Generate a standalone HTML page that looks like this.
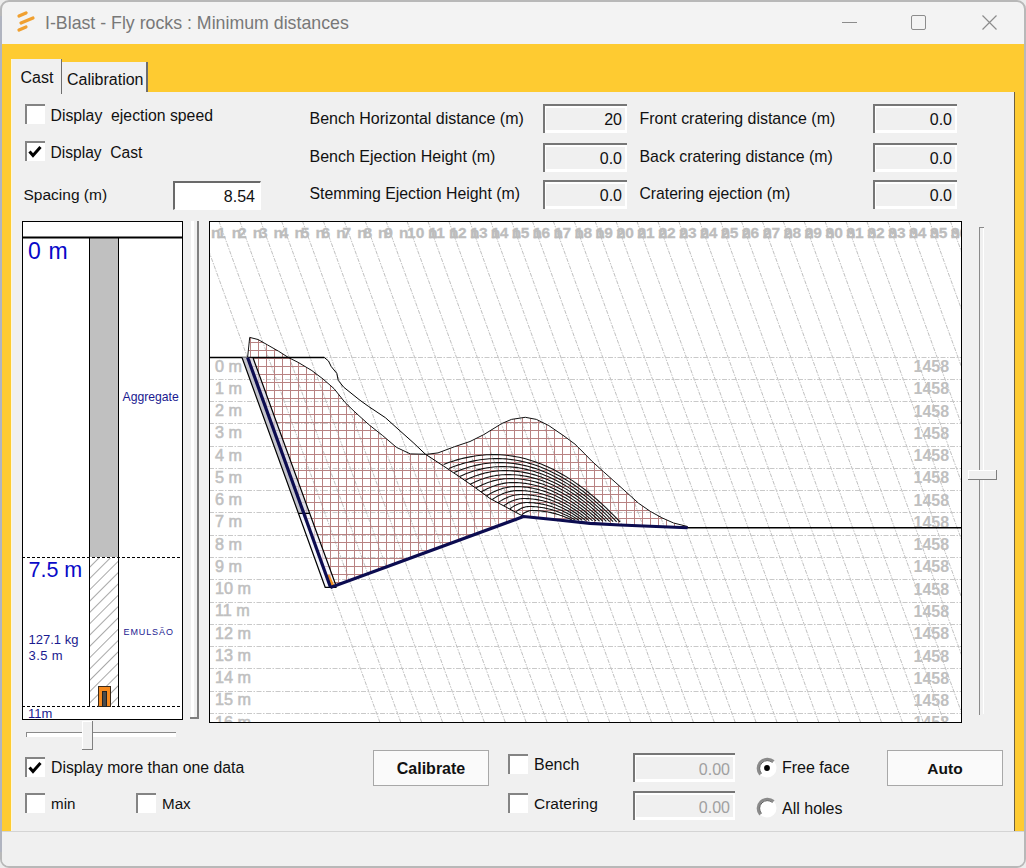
<!DOCTYPE html>
<html><head><meta charset="utf-8">
<style>
*{margin:0;padding:0;box-sizing:border-box}
html,body{width:1026px;height:868px;overflow:hidden;background:#ececec;font-family:"Liberation Sans",sans-serif;color:#000}
.abs{position:absolute}
.t{position:absolute;white-space:nowrap;font-size:16px;line-height:16px;color:#111}
.cb{position:absolute;width:20px;height:20px;background:#fff;border-top:2px solid #848484;border-left:2px solid #848484}
.inp{position:absolute;background:#fff;border-top:2px solid #6a6a6a;border-left:2px solid #6a6a6a;border-right:1px solid #fff;border-bottom:1px solid #fff}
.inpg{position:absolute;background:#f0f0f0;border-top:2px solid #767676;border-left:2px solid #767676;box-shadow:inset 1px 2px 0 #fff, inset -2px -3px 0 #fff}
.btn{position:absolute;background:#fafafa;border:1px solid #a8a8a8}
</style></head><body>
<div class="abs" style="left:0;top:0;width:1026px;height:868px;background:#f3f3f3;border:2px solid #b8b8b8;border-radius:9px"></div>
<div class="abs" style="left:0;top:16px;width:2px;height:836px;background:#b0b4c0"></div>

<svg class="abs" style="left:14px;top:10px" width="24" height="24" viewBox="0 0 24 24"><g stroke="#f0a030" stroke-width="3.2" stroke-linecap="round" fill="none"><path d="M5 6 L12 3"/><path d="M7 13 L19 8"/><path d="M5 20 L12 17"/></g></svg>
<div class="abs" style="left:45px;top:13.4px;font-size:17.75px;line-height:20px;color:#787878;white-space:nowrap">I-Blast - Fly rocks : Minimum distances</div>
<div class="abs" style="left:842px;top:21.5px;width:15px;height:1px;background:#8c8c8c"></div>
<div class="abs" style="left:911px;top:15px;width:15px;height:15px;border:1.2px solid #8c8c8c;border-radius:2px"></div>
<svg class="abs" style="left:981px;top:14px" width="17" height="17" viewBox="0 0 17 17"><path d="M1.5 1.5L15.5 15.5M15.5 1.5L1.5 15.5" stroke="#8c8c8c" stroke-width="1.2"/></svg>
<div class="abs" style="left:2px;top:44px;width:1022px;height:787px;background:#fecb31"></div>
<div class="abs" style="left:11px;top:59px;width:51px;height:35px;background:#f0f0f0;border-left:1px solid #fff8d8"></div>
<div class="t" style="left:20.5px;top:70px;font-size:16px">Cast</div>
<div class="abs" style="left:62px;top:62px;width:86px;height:30px;background:#f0f0f0;border-right:2px solid #6e6e6e"></div>
<div class="t" style="left:67px;top:72px;font-size:16px">Calibration</div>
<div class="abs" style="left:11px;top:92px;width:1003px;height:739px;background:#f0f0f0;border-left:1px solid #fff8d8"></div>
<div class="abs" style="left:1014px;top:92px;width:1px;height:739px;background:#6e6040"></div>
<div class="abs" style="left:60.5px;top:59px;width:1.5px;height:35px;background:#6e6e6e"></div>
<div class="abs" style="left:2px;top:831px;width:1022px;height:35px;background:#f0f0f0;border-top:1px solid #d4d4d4;border-radius:0 0 7px 7px"></div>
<div class="cb" style="left:25px;top:104px"></div>
<div class="t" style="left:50.5px;top:107.5px;font-size:15.8px">Display&nbsp; ejection speed</div>
<div class="cb" style="left:25px;top:141px"></div>
<svg class="abs" style="left:28px;top:145px" width="14" height="13" viewBox="0 0 14 13"><path d="M1.5 6.5 L5 10.5 L12.5 2" stroke="#000" stroke-width="3" fill="none"/></svg>
<div class="t" style="left:50.5px;top:144.5px;font-size:15.6px">Display&nbsp; Cast</div>
<div class="t" style="left:23.5px;top:187px;font-size:15.5px">Spacing (m)</div>
<div class="inp" style="left:173px;top:181px;width:88px;height:29px"></div>
<div class="t" style="left:173px;top:189px;width:82px;text-align:right;font-size:16px">8.54</div>
<div class="t" style="left:309.5px;top:110.5px;font-size:16px">Bench Horizontal distance (m)</div>
<div class="t" style="left:309.5px;top:149px;font-size:16px">Bench Ejection Height (m)</div>
<div class="t" style="left:309.5px;top:185.8px;font-size:15.85px">Stemming Ejection Height (m)</div>
<div class="t" style="left:639.5px;top:110.5px;font-size:15.95px">Front cratering distance (m)</div>
<div class="t" style="left:639.5px;top:149px;font-size:15.9px">Back cratering distance (m)</div>
<div class="t" style="left:639.5px;top:185.8px;font-size:15.7px">Cratering ejection (m)</div>
<div class="inpg" style="left:543px;top:104px;width:84px;height:29px"></div>
<div class="t" style="left:543px;top:112px;width:79px;text-align:right;font-size:16px">20</div>
<div class="inpg" style="left:543px;top:143px;width:84px;height:29px"></div>
<div class="t" style="left:543px;top:151px;width:79px;text-align:right;font-size:16px">0.0</div>
<div class="inpg" style="left:543px;top:180px;width:84px;height:29px"></div>
<div class="t" style="left:543px;top:188px;width:79px;text-align:right;font-size:16px">0.0</div>
<div class="inpg" style="left:873px;top:104px;width:84px;height:29px"></div>
<div class="t" style="left:873px;top:112px;width:79px;text-align:right;font-size:16px">0.0</div>
<div class="inpg" style="left:873px;top:143px;width:84px;height:29px"></div>
<div class="t" style="left:873px;top:151px;width:79px;text-align:right;font-size:16px">0.0</div>
<div class="inpg" style="left:873px;top:180px;width:84px;height:29px"></div>
<div class="t" style="left:873px;top:188px;width:79px;text-align:right;font-size:16px">0.0</div>
<div class="abs" style="left:190px;top:221px;width:9px;height:498px;border-right:2px solid #808080;border-bottom:2px solid #808080"></div>
<div class="abs" style="left:191px;top:221px;width:3px;height:496px;background:#fff"></div>
<svg class="abs" style="left:0;top:0" width="1026" height="868" viewBox="0 0 1026 868"><defs><clipPath id="cc"><rect x="210" y="222" width="751" height="500"/></clipPath><pattern id="hg" patternUnits="userSpaceOnUse" x="250" y="342" width="8" height="8"><rect x="0" y="0" width="1" height="8" fill="#b88282"/><rect x="0" y="0" width="8" height="1" fill="#b88282"/></pattern><pattern id="lh" patternUnits="userSpaceOnUse" x="0" y="0" width="8" height="8" patternTransform="rotate(45)"><rect x="0" y="0" width="1" height="8" fill="#a8a8a8"/></pattern></defs><rect x="209" y="221" width="753" height="502" fill="#fff"/><g clip-path="url(#cc)"><path d="M197.92 221L380.15 723M218.82 221L401.05 723M239.72 221L421.95 723M260.62 221L442.85 723M281.52 221L463.75 723M302.42 221L484.65 723M323.32 221L505.55 723M344.22 221L526.45 723M365.12 221L547.35 723M386.02 221L568.25 723M406.92 221L589.15 723M427.82 221L610.05 723M448.72 221L630.95 723M469.62 221L651.85 723M490.52 221L672.75 723M511.42 221L693.65 723M532.32 221L714.55 723M553.22 221L735.45 723M574.12 221L756.35 723M595.02 221L777.25 723M615.92 221L798.15 723M636.82 221L819.05 723M657.72 221L839.95 723M678.62 221L860.85 723M699.52 221L881.75 723M720.42 221L902.65 723M741.32 221L923.55 723M762.22 221L944.45 723M783.12 221L965.35 723M804.02 221L986.25 723M824.92 221L1007.15 723M845.82 221L1028.05 723M866.72 221L1048.95 723M887.62 221L1069.85 723M908.52 221L1090.75 723M929.42 221L1111.65 723M950.32 221L1132.55 723" stroke="#c0c0c0" stroke-width="1" stroke-dasharray="4 1.2 1.5 1.2" fill="none"/><path d="M209 357.5H962M209 379.5H962M209 401.5H962M209 423.5H962M209 446.5H962M209 468.5H962M209 490.5H962M209 512.5H962M209 535.5H962M209 557.5H962M209 579.5H962M209 602.5H962M209 624.5H962M209 646.5H962M209 668.5H962M209 691.5H962M209 713.5H962" stroke="#c9c9c9" stroke-width="1" stroke-dasharray="5 1.5 1.5 1.5" fill="none"/><text x="210.9" y="238.4" font-family="Liberation Sans" font-weight="bold" font-size="15.5" fill="#bdbdbd" stroke="#bdbdbd" stroke-width="0.3">n</text><text x="217.1" y="238.4" font-family="Liberation Sans" font-weight="bold" font-size="15.5" fill="#bdbdbd" stroke="#bdbdbd" stroke-width="0.3">1</text><text x="231.8" y="238.4" font-family="Liberation Sans" font-weight="bold" font-size="15.5" fill="#bdbdbd" stroke="#bdbdbd" stroke-width="0.3">n</text><text x="238.0" y="238.4" font-family="Liberation Sans" font-weight="bold" font-size="15.5" fill="#bdbdbd" stroke="#bdbdbd" stroke-width="0.3">2</text><text x="252.7" y="238.4" font-family="Liberation Sans" font-weight="bold" font-size="15.5" fill="#bdbdbd" stroke="#bdbdbd" stroke-width="0.3">n</text><text x="258.9" y="238.4" font-family="Liberation Sans" font-weight="bold" font-size="15.5" fill="#bdbdbd" stroke="#bdbdbd" stroke-width="0.3">3</text><text x="273.6" y="238.4" font-family="Liberation Sans" font-weight="bold" font-size="15.5" fill="#bdbdbd" stroke="#bdbdbd" stroke-width="0.3">n</text><text x="279.8" y="238.4" font-family="Liberation Sans" font-weight="bold" font-size="15.5" fill="#bdbdbd" stroke="#bdbdbd" stroke-width="0.3">4</text><text x="294.5" y="238.4" font-family="Liberation Sans" font-weight="bold" font-size="15.5" fill="#bdbdbd" stroke="#bdbdbd" stroke-width="0.3">n</text><text x="300.7" y="238.4" font-family="Liberation Sans" font-weight="bold" font-size="15.5" fill="#bdbdbd" stroke="#bdbdbd" stroke-width="0.3">5</text><text x="315.4" y="238.4" font-family="Liberation Sans" font-weight="bold" font-size="15.5" fill="#bdbdbd" stroke="#bdbdbd" stroke-width="0.3">n</text><text x="321.6" y="238.4" font-family="Liberation Sans" font-weight="bold" font-size="15.5" fill="#bdbdbd" stroke="#bdbdbd" stroke-width="0.3">6</text><text x="336.3" y="238.4" font-family="Liberation Sans" font-weight="bold" font-size="15.5" fill="#bdbdbd" stroke="#bdbdbd" stroke-width="0.3">n</text><text x="342.5" y="238.4" font-family="Liberation Sans" font-weight="bold" font-size="15.5" fill="#bdbdbd" stroke="#bdbdbd" stroke-width="0.3">7</text><text x="357.2" y="238.4" font-family="Liberation Sans" font-weight="bold" font-size="15.5" fill="#bdbdbd" stroke="#bdbdbd" stroke-width="0.3">n</text><text x="363.4" y="238.4" font-family="Liberation Sans" font-weight="bold" font-size="15.5" fill="#bdbdbd" stroke="#bdbdbd" stroke-width="0.3">8</text><text x="378.1" y="238.4" font-family="Liberation Sans" font-weight="bold" font-size="15.5" fill="#bdbdbd" stroke="#bdbdbd" stroke-width="0.3">n</text><text x="384.3" y="238.4" font-family="Liberation Sans" font-weight="bold" font-size="15.5" fill="#bdbdbd" stroke="#bdbdbd" stroke-width="0.3">9</text><text x="399.0" y="238.4" font-family="Liberation Sans" font-weight="bold" font-size="15.5" fill="#bdbdbd" stroke="#bdbdbd" stroke-width="0.3">n</text><text x="407.1" y="238.4" font-family="Liberation Sans" font-weight="bold" font-size="15.5" fill="#bdbdbd" stroke="#bdbdbd" stroke-width="0.3">10</text><text x="428.1" y="238.4" font-family="Liberation Sans" font-weight="bold" font-size="15.5" fill="#bdbdbd" stroke="#bdbdbd" stroke-width="0.3">n</text><text x="428.5" y="238.4" font-family="Liberation Sans" font-weight="bold" font-size="15.5" fill="#bdbdbd" stroke="#bdbdbd" stroke-width="0.3">11</text><text x="449.0" y="238.4" font-family="Liberation Sans" font-weight="bold" font-size="15.5" fill="#bdbdbd" stroke="#bdbdbd" stroke-width="0.3">n</text><text x="449.4" y="238.4" font-family="Liberation Sans" font-weight="bold" font-size="15.5" fill="#bdbdbd" stroke="#bdbdbd" stroke-width="0.3">12</text><text x="469.9" y="238.4" font-family="Liberation Sans" font-weight="bold" font-size="15.5" fill="#bdbdbd" stroke="#bdbdbd" stroke-width="0.3">n</text><text x="470.3" y="238.4" font-family="Liberation Sans" font-weight="bold" font-size="15.5" fill="#bdbdbd" stroke="#bdbdbd" stroke-width="0.3">13</text><text x="490.8" y="238.4" font-family="Liberation Sans" font-weight="bold" font-size="15.5" fill="#bdbdbd" stroke="#bdbdbd" stroke-width="0.3">n</text><text x="491.2" y="238.4" font-family="Liberation Sans" font-weight="bold" font-size="15.5" fill="#bdbdbd" stroke="#bdbdbd" stroke-width="0.3">14</text><text x="511.7" y="238.4" font-family="Liberation Sans" font-weight="bold" font-size="15.5" fill="#bdbdbd" stroke="#bdbdbd" stroke-width="0.3">n</text><text x="512.1" y="238.4" font-family="Liberation Sans" font-weight="bold" font-size="15.5" fill="#bdbdbd" stroke="#bdbdbd" stroke-width="0.3">15</text><text x="532.6" y="238.4" font-family="Liberation Sans" font-weight="bold" font-size="15.5" fill="#bdbdbd" stroke="#bdbdbd" stroke-width="0.3">n</text><text x="533.0" y="238.4" font-family="Liberation Sans" font-weight="bold" font-size="15.5" fill="#bdbdbd" stroke="#bdbdbd" stroke-width="0.3">16</text><text x="553.5" y="238.4" font-family="Liberation Sans" font-weight="bold" font-size="15.5" fill="#bdbdbd" stroke="#bdbdbd" stroke-width="0.3">n</text><text x="553.9" y="238.4" font-family="Liberation Sans" font-weight="bold" font-size="15.5" fill="#bdbdbd" stroke="#bdbdbd" stroke-width="0.3">17</text><text x="574.4" y="238.4" font-family="Liberation Sans" font-weight="bold" font-size="15.5" fill="#bdbdbd" stroke="#bdbdbd" stroke-width="0.3">n</text><text x="574.8" y="238.4" font-family="Liberation Sans" font-weight="bold" font-size="15.5" fill="#bdbdbd" stroke="#bdbdbd" stroke-width="0.3">18</text><text x="595.3" y="238.4" font-family="Liberation Sans" font-weight="bold" font-size="15.5" fill="#bdbdbd" stroke="#bdbdbd" stroke-width="0.3">n</text><text x="595.7" y="238.4" font-family="Liberation Sans" font-weight="bold" font-size="15.5" fill="#bdbdbd" stroke="#bdbdbd" stroke-width="0.3">19</text><text x="616.2" y="238.4" font-family="Liberation Sans" font-weight="bold" font-size="15.5" fill="#bdbdbd" stroke="#bdbdbd" stroke-width="0.3">n</text><text x="616.6" y="238.4" font-family="Liberation Sans" font-weight="bold" font-size="15.5" fill="#bdbdbd" stroke="#bdbdbd" stroke-width="0.3">20</text><text x="637.1" y="238.4" font-family="Liberation Sans" font-weight="bold" font-size="15.5" fill="#bdbdbd" stroke="#bdbdbd" stroke-width="0.3">n</text><text x="637.5" y="238.4" font-family="Liberation Sans" font-weight="bold" font-size="15.5" fill="#bdbdbd" stroke="#bdbdbd" stroke-width="0.3">21</text><text x="658.0" y="238.4" font-family="Liberation Sans" font-weight="bold" font-size="15.5" fill="#bdbdbd" stroke="#bdbdbd" stroke-width="0.3">n</text><text x="658.4" y="238.4" font-family="Liberation Sans" font-weight="bold" font-size="15.5" fill="#bdbdbd" stroke="#bdbdbd" stroke-width="0.3">22</text><text x="678.9" y="238.4" font-family="Liberation Sans" font-weight="bold" font-size="15.5" fill="#bdbdbd" stroke="#bdbdbd" stroke-width="0.3">n</text><text x="679.3" y="238.4" font-family="Liberation Sans" font-weight="bold" font-size="15.5" fill="#bdbdbd" stroke="#bdbdbd" stroke-width="0.3">23</text><text x="699.8" y="238.4" font-family="Liberation Sans" font-weight="bold" font-size="15.5" fill="#bdbdbd" stroke="#bdbdbd" stroke-width="0.3">n</text><text x="700.2" y="238.4" font-family="Liberation Sans" font-weight="bold" font-size="15.5" fill="#bdbdbd" stroke="#bdbdbd" stroke-width="0.3">24</text><text x="720.7" y="238.4" font-family="Liberation Sans" font-weight="bold" font-size="15.5" fill="#bdbdbd" stroke="#bdbdbd" stroke-width="0.3">n</text><text x="721.1" y="238.4" font-family="Liberation Sans" font-weight="bold" font-size="15.5" fill="#bdbdbd" stroke="#bdbdbd" stroke-width="0.3">25</text><text x="741.6" y="238.4" font-family="Liberation Sans" font-weight="bold" font-size="15.5" fill="#bdbdbd" stroke="#bdbdbd" stroke-width="0.3">n</text><text x="742.0" y="238.4" font-family="Liberation Sans" font-weight="bold" font-size="15.5" fill="#bdbdbd" stroke="#bdbdbd" stroke-width="0.3">26</text><text x="762.5" y="238.4" font-family="Liberation Sans" font-weight="bold" font-size="15.5" fill="#bdbdbd" stroke="#bdbdbd" stroke-width="0.3">n</text><text x="762.9" y="238.4" font-family="Liberation Sans" font-weight="bold" font-size="15.5" fill="#bdbdbd" stroke="#bdbdbd" stroke-width="0.3">27</text><text x="783.4" y="238.4" font-family="Liberation Sans" font-weight="bold" font-size="15.5" fill="#bdbdbd" stroke="#bdbdbd" stroke-width="0.3">n</text><text x="783.8" y="238.4" font-family="Liberation Sans" font-weight="bold" font-size="15.5" fill="#bdbdbd" stroke="#bdbdbd" stroke-width="0.3">28</text><text x="804.3" y="238.4" font-family="Liberation Sans" font-weight="bold" font-size="15.5" fill="#bdbdbd" stroke="#bdbdbd" stroke-width="0.3">n</text><text x="804.7" y="238.4" font-family="Liberation Sans" font-weight="bold" font-size="15.5" fill="#bdbdbd" stroke="#bdbdbd" stroke-width="0.3">29</text><text x="825.2" y="238.4" font-family="Liberation Sans" font-weight="bold" font-size="15.5" fill="#bdbdbd" stroke="#bdbdbd" stroke-width="0.3">n</text><text x="825.6" y="238.4" font-family="Liberation Sans" font-weight="bold" font-size="15.5" fill="#bdbdbd" stroke="#bdbdbd" stroke-width="0.3">30</text><text x="846.1" y="238.4" font-family="Liberation Sans" font-weight="bold" font-size="15.5" fill="#bdbdbd" stroke="#bdbdbd" stroke-width="0.3">n</text><text x="846.5" y="238.4" font-family="Liberation Sans" font-weight="bold" font-size="15.5" fill="#bdbdbd" stroke="#bdbdbd" stroke-width="0.3">31</text><text x="867.0" y="238.4" font-family="Liberation Sans" font-weight="bold" font-size="15.5" fill="#bdbdbd" stroke="#bdbdbd" stroke-width="0.3">n</text><text x="867.4" y="238.4" font-family="Liberation Sans" font-weight="bold" font-size="15.5" fill="#bdbdbd" stroke="#bdbdbd" stroke-width="0.3">32</text><text x="887.9" y="238.4" font-family="Liberation Sans" font-weight="bold" font-size="15.5" fill="#bdbdbd" stroke="#bdbdbd" stroke-width="0.3">n</text><text x="888.3" y="238.4" font-family="Liberation Sans" font-weight="bold" font-size="15.5" fill="#bdbdbd" stroke="#bdbdbd" stroke-width="0.3">33</text><text x="908.8" y="238.4" font-family="Liberation Sans" font-weight="bold" font-size="15.5" fill="#bdbdbd" stroke="#bdbdbd" stroke-width="0.3">n</text><text x="909.2" y="238.4" font-family="Liberation Sans" font-weight="bold" font-size="15.5" fill="#bdbdbd" stroke="#bdbdbd" stroke-width="0.3">34</text><text x="929.7" y="238.4" font-family="Liberation Sans" font-weight="bold" font-size="15.5" fill="#bdbdbd" stroke="#bdbdbd" stroke-width="0.3">n</text><text x="930.1" y="238.4" font-family="Liberation Sans" font-weight="bold" font-size="15.5" fill="#bdbdbd" stroke="#bdbdbd" stroke-width="0.3">35</text><text x="950.6" y="238.4" font-family="Liberation Sans" font-weight="bold" font-size="15.5" fill="#bdbdbd" stroke="#bdbdbd" stroke-width="0.3">n</text><text x="951.0" y="238.4" font-family="Liberation Sans" font-weight="bold" font-size="15.5" fill="#bdbdbd" stroke="#bdbdbd" stroke-width="0.3">36</text><text x="215" y="371.6" font-family="Liberation Sans" font-size="16.2" fill="#c0c0c0" stroke="#c0c0c0" stroke-width="0.55">0 m</text><text x="913.5" y="371.9" font-family="Liberation Sans" font-weight="bold" font-size="16" fill="#c0c0c0">1458</text><text x="215" y="393.9" font-family="Liberation Sans" font-size="16.2" fill="#c0c0c0" stroke="#c0c0c0" stroke-width="0.55">1 m</text><text x="913.5" y="394.2" font-family="Liberation Sans" font-weight="bold" font-size="16" fill="#c0c0c0">1458</text><text x="215" y="416.1" font-family="Liberation Sans" font-size="16.2" fill="#c0c0c0" stroke="#c0c0c0" stroke-width="0.55">2 m</text><text x="913.5" y="416.5" font-family="Liberation Sans" font-weight="bold" font-size="16" fill="#c0c0c0">1458</text><text x="215" y="438.4" font-family="Liberation Sans" font-size="16.2" fill="#c0c0c0" stroke="#c0c0c0" stroke-width="0.55">3 m</text><text x="913.5" y="438.7" font-family="Liberation Sans" font-weight="bold" font-size="16" fill="#c0c0c0">1458</text><text x="215" y="460.6" font-family="Liberation Sans" font-size="16.2" fill="#c0c0c0" stroke="#c0c0c0" stroke-width="0.55">4 m</text><text x="913.5" y="461.0" font-family="Liberation Sans" font-weight="bold" font-size="16" fill="#c0c0c0">1458</text><text x="215" y="482.9" font-family="Liberation Sans" font-size="16.2" fill="#c0c0c0" stroke="#c0c0c0" stroke-width="0.55">5 m</text><text x="913.5" y="483.3" font-family="Liberation Sans" font-weight="bold" font-size="16" fill="#c0c0c0">1458</text><text x="215" y="505.1" font-family="Liberation Sans" font-size="16.2" fill="#c0c0c0" stroke="#c0c0c0" stroke-width="0.55">6 m</text><text x="913.5" y="505.6" font-family="Liberation Sans" font-weight="bold" font-size="16" fill="#c0c0c0">1458</text><text x="215" y="527.4" font-family="Liberation Sans" font-size="16.2" fill="#c0c0c0" stroke="#c0c0c0" stroke-width="0.55">7 m</text><text x="913.5" y="527.9" font-family="Liberation Sans" font-weight="bold" font-size="16" fill="#c0c0c0">1458</text><text x="215" y="549.6" font-family="Liberation Sans" font-size="16.2" fill="#c0c0c0" stroke="#c0c0c0" stroke-width="0.55">8 m</text><text x="913.5" y="550.1" font-family="Liberation Sans" font-weight="bold" font-size="16" fill="#c0c0c0">1458</text><text x="215" y="571.9" font-family="Liberation Sans" font-size="16.2" fill="#c0c0c0" stroke="#c0c0c0" stroke-width="0.55">9 m</text><text x="913.5" y="572.4" font-family="Liberation Sans" font-weight="bold" font-size="16" fill="#c0c0c0">1458</text><text x="215" y="594.1" font-family="Liberation Sans" font-size="16.2" fill="#c0c0c0" stroke="#c0c0c0" stroke-width="0.55">10 m</text><text x="913.5" y="594.7" font-family="Liberation Sans" font-weight="bold" font-size="16" fill="#c0c0c0">1458</text><text x="215" y="616.4" font-family="Liberation Sans" font-size="16.2" fill="#c0c0c0" stroke="#c0c0c0" stroke-width="0.55">11 m</text><text x="913.5" y="617.0" font-family="Liberation Sans" font-weight="bold" font-size="16" fill="#c0c0c0">1458</text><text x="215" y="638.6" font-family="Liberation Sans" font-size="16.2" fill="#c0c0c0" stroke="#c0c0c0" stroke-width="0.55">12 m</text><text x="913.5" y="639.3" font-family="Liberation Sans" font-weight="bold" font-size="16" fill="#c0c0c0">1458</text><text x="215" y="660.9" font-family="Liberation Sans" font-size="16.2" fill="#c0c0c0" stroke="#c0c0c0" stroke-width="0.55">13 m</text><text x="913.5" y="661.5" font-family="Liberation Sans" font-weight="bold" font-size="16" fill="#c0c0c0">1458</text><text x="215" y="683.1" font-family="Liberation Sans" font-size="16.2" fill="#c0c0c0" stroke="#c0c0c0" stroke-width="0.55">14 m</text><text x="913.5" y="683.8" font-family="Liberation Sans" font-weight="bold" font-size="16" fill="#c0c0c0">1458</text><text x="215" y="705.4" font-family="Liberation Sans" font-size="16.2" fill="#c0c0c0" stroke="#c0c0c0" stroke-width="0.55">15 m</text><text x="913.5" y="706.1" font-family="Liberation Sans" font-weight="bold" font-size="16" fill="#c0c0c0">1458</text><text x="215" y="727.6" font-family="Liberation Sans" font-size="16.2" fill="#c0c0c0" stroke="#c0c0c0" stroke-width="0.55">16 m</text><text x="913.5" y="728.4" font-family="Liberation Sans" font-weight="bold" font-size="16" fill="#c0c0c0">1458</text><path d="M247.6 357.5 L249.7 337.4 L258 339.5 L267.7 345 L278.7 351.3 L288.4 357.5 L298 362.3 L311.9 370.6 L323 379 L334 388.6 L345 402.4 L355 412.1 L368.8 424.6 L382.7 435.6 L396.5 447.4 L410.3 453.9 L426.9 454.3 L438 452.9 L454.5 446.7 L470 441.5 L483.8 434.6 L501.8 423.5 L511.5 419.4 L525.3 417.3 L536.4 419.4 L548.8 425.6 L564 436 L575 444.2 L584.8 453.9 L591.7 461 L603.4 471.6 L615.1 482.1 L626.8 492.6 L638.5 503.2 L650.2 511.3 L661.9 517.8 L673.6 523 L687.6 526.5 L687.6 527.5 L650 526.3 L620 525 L590 523.4 L558.2 520 L523.6 516.5 L330.4 587.5Z" fill="url(#hg)"/><path d="M209 357.5 L324.3 357.5 L328.5 361 L331.2 366.5 L336.8 373.4 L338.2 380.3 L343.7 387.2 L360 400.3 L368.8 406.6 L385.4 417.7 L399.2 430.1 L413.1 442.5 L425.5 454.3 L443.5 466 L460 477.1 L475 487.5 L490 498.5 L523.6 516.5" stroke="#000" stroke-width="1" fill="none"/><path d="M247.6 357.5 L249.7 337.4 L258 339.5 L267.7 345 L278.7 351.3 L288.4 357.5 L298 362.3 L311.9 370.6 L323 379 L334 388.6 L345 402.4 L355 412.1 L368.8 424.6 L382.7 435.6 L396.5 447.4 L410.3 453.9 L426.9 454.3 L438 452.9 L454.5 446.7 L470 441.5 L483.8 434.6 L501.8 423.5 L511.5 419.4 L525.3 417.3 L536.4 419.4 L548.8 425.6 L564 436 L575 444.2 L584.8 453.9 L591.7 461 L603.4 471.6 L615.1 482.1 L626.8 492.6 L638.5 503.2 L650.2 511.3 L661.9 517.8 L673.6 523 L687.6 526.5" stroke="#111" stroke-width="1" fill="none"/><path d="M209 357.5H324.3" stroke="#000" stroke-width="1.6" fill="none"/><path d="M687 527.8H962" stroke="#000" stroke-width="1.4" fill="none"/><path d="M443.6 464.4 L446.1 463.4 L448.6 462.5 L451.2 461.7 L453.7 460.9 L456.2 460.1 L458.7 459.4 L461.2 458.7 L463.8 458.1 L466.3 457.6 L468.8 457.1 L471.3 456.6 L473.8 456.2 L476.4 455.8 L478.9 455.5 L481.4 455.2 L483.9 455.0 L486.4 454.8 L489.0 454.7 L491.5 454.6 L494.0 454.6 L497.1 454.6 L500.3 454.8 L503.4 455.0 L506.6 455.3 L509.8 455.7 L512.9 456.1 L516.0 456.7 L519.2 457.3 L522.4 458.0 L525.5 458.8 L528.6 459.7 L531.8 460.7 L535.0 461.7 L538.1 462.9 L541.2 464.1 L544.4 465.4 L547.5 466.8 L550.7 468.2 L553.9 469.8 L557.0 471.5 L560.1 473.2 L563.3 475.0 L566.5 476.9 L569.6 478.9 L572.8 480.9 L575.9 483.1 L579.0 485.3 L582.2 487.6 L585.4 490.0 L588.5 492.5 L591.6 495.1 L594.8 497.7 L598.0 500.5 L601.1 503.3 L604.2 506.2 L607.4 509.2 L610.5 512.3 L613.7 515.4 L616.9 518.7 L620.0 522.0 M448.9 468.5 L451.3 467.5 L453.7 466.6 L456.0 465.7 L458.4 464.9 L460.8 464.2 L463.2 463.4 L465.6 462.8 L468.0 462.2 L470.4 461.6 L472.8 461.1 L475.2 460.6 L477.6 460.2 L480.0 459.8 L482.4 459.5 L484.8 459.2 L487.1 459.0 L489.5 458.8 L491.9 458.7 L494.3 458.6 L496.7 458.6 L499.7 458.6 L502.7 458.8 L505.7 458.9 L508.7 459.2 L511.7 459.6 L514.7 460.0 L517.7 460.5 L520.7 461.1 L523.7 461.8 L526.7 462.5 L529.7 463.4 L532.7 464.3 L535.7 465.3 L538.7 466.3 L541.7 467.5 L544.7 468.7 L547.7 470.0 L550.6 471.4 L553.6 472.9 L556.6 474.4 L559.6 476.0 L562.6 477.7 L565.6 479.5 L568.6 481.4 L571.6 483.3 L574.6 485.3 L577.6 487.4 L580.6 489.6 L583.6 491.8 L586.6 494.2 L589.6 496.6 L592.6 499.1 L595.6 501.7 L598.6 504.3 L601.6 507.0 L604.6 509.8 L607.6 512.7 L610.6 515.7 L613.6 518.7 L616.6 521.9 M454.1 472.6 L456.4 471.6 L458.7 470.7 L460.9 469.8 L463.2 469.0 L465.5 468.2 L467.7 467.5 L470.0 466.8 L472.3 466.2 L474.5 465.6 L476.8 465.1 L479.0 464.6 L481.3 464.2 L483.6 463.8 L485.8 463.5 L488.1 463.2 L490.4 463.0 L492.6 462.8 L494.9 462.7 L497.2 462.6 L499.4 462.6 L502.3 462.6 L505.1 462.7 L508.0 462.9 L510.8 463.2 L513.6 463.5 L516.5 463.9 L519.3 464.4 L522.2 465.0 L525.0 465.6 L527.9 466.3 L530.7 467.1 L533.5 467.9 L536.4 468.8 L539.2 469.8 L542.1 470.9 L544.9 472.0 L547.8 473.3 L550.6 474.6 L553.4 475.9 L556.3 477.4 L559.1 478.9 L562.0 480.5 L564.8 482.1 L567.7 483.9 L570.5 485.7 L573.3 487.6 L576.2 489.5 L579.0 491.6 L581.9 493.7 L584.7 495.8 L587.6 498.1 L590.4 500.4 L593.2 502.8 L596.1 505.3 L598.9 507.9 L601.8 510.5 L604.6 513.2 L607.5 515.9 L610.3 518.8 L613.1 521.7 M459.4 476.6 L461.5 475.7 L463.7 474.7 L465.8 473.8 L467.9 473.0 L470.1 472.2 L472.2 471.5 L474.4 470.8 L476.5 470.2 L478.6 469.6 L480.8 469.1 L482.9 468.6 L485.0 468.2 L487.2 467.8 L489.3 467.5 L491.5 467.2 L493.6 467.0 L495.7 466.8 L497.9 466.7 L500.0 466.6 L502.1 466.6 L504.8 466.6 L507.5 466.7 L510.2 466.9 L512.9 467.1 L515.6 467.4 L518.3 467.8 L521.0 468.3 L523.7 468.8 L526.3 469.4 L529.0 470.0 L531.7 470.7 L534.4 471.5 L537.1 472.4 L539.8 473.3 L542.5 474.3 L545.2 475.4 L547.9 476.5 L550.5 477.7 L553.2 479.0 L555.9 480.3 L558.6 481.7 L561.3 483.2 L564.0 484.8 L566.7 486.4 L569.4 488.1 L572.1 489.8 L574.8 491.6 L577.4 493.5 L580.1 495.5 L582.8 497.5 L585.5 499.6 L588.2 501.8 L590.9 504.0 L593.6 506.3 L596.3 508.7 L599.0 511.1 L601.6 513.6 L604.3 516.2 L607.0 518.9 L609.7 521.6 M464.8 480.5 L466.8 479.5 L468.8 478.6 L470.8 477.7 L472.8 476.9 L474.9 476.1 L476.9 475.4 L478.9 474.7 L480.9 474.1 L482.9 473.6 L484.9 473.0 L486.9 472.6 L488.9 472.2 L490.9 471.8 L492.9 471.5 L494.9 471.2 L496.9 471.0 L498.9 470.8 L500.9 470.7 L502.9 470.6 L504.9 470.6 L507.4 470.6 L509.9 470.7 L512.5 470.9 L515.0 471.1 L517.5 471.4 L520.1 471.7 L522.6 472.1 L525.1 472.6 L527.7 473.1 L530.2 473.8 L532.8 474.4 L535.3 475.1 L537.8 475.9 L540.4 476.8 L542.9 477.7 L545.4 478.7 L548.0 479.8 L550.5 480.9 L553.0 482.0 L555.6 483.3 L558.1 484.6 L560.6 486.0 L563.2 487.4 L565.7 488.9 L568.2 490.4 L570.8 492.1 L573.3 493.7 L575.9 495.5 L578.4 497.3 L580.9 499.2 L583.5 501.1 L586.0 503.1 L588.5 505.2 L591.1 507.3 L593.6 509.5 L596.1 511.8 L598.7 514.1 L601.2 516.5 L603.8 518.9 L606.3 521.4 M470.3 484.3 L472.2 483.3 L474.0 482.4 L475.9 481.6 L477.8 480.8 L479.6 480.0 L481.5 479.3 L483.4 478.7 L485.2 478.1 L487.1 477.5 L488.9 477.0 L490.8 476.5 L492.7 476.1 L494.5 475.8 L496.4 475.4 L498.3 475.2 L500.1 475.0 L502.0 474.8 L503.8 474.7 L505.7 474.6 L507.6 474.6 L510.0 474.6 L512.3 474.7 L514.7 474.8 L517.1 475.0 L519.5 475.3 L521.9 475.6 L524.2 476.0 L526.6 476.4 L529.0 476.9 L531.4 477.5 L533.8 478.1 L536.2 478.8 L538.5 479.5 L540.9 480.3 L543.3 481.1 L545.7 482.0 L548.1 483.0 L550.5 484.0 L552.8 485.1 L555.2 486.2 L557.6 487.4 L560.0 488.7 L562.4 490.0 L564.7 491.4 L567.1 492.8 L569.5 494.3 L571.9 495.9 L574.3 497.5 L576.7 499.1 L579.0 500.8 L581.4 502.6 L583.8 504.5 L586.2 506.4 L588.6 508.3 L590.9 510.3 L593.3 512.4 L595.7 514.5 L598.1 516.7 L600.5 519.0 L602.9 521.3 M475.8 488.1 L477.5 487.1 L479.2 486.3 L481.0 485.4 L482.7 484.6 L484.4 483.9 L486.1 483.2 L487.9 482.6 L489.6 482.0 L491.3 481.4 L493.0 480.9 L494.8 480.5 L496.5 480.1 L498.2 479.7 L499.9 479.4 L501.7 479.2 L503.4 478.9 L505.1 478.8 L506.8 478.7 L508.6 478.6 L510.3 478.6 L512.5 478.6 L514.7 478.7 L517.0 478.8 L519.2 479.0 L521.4 479.2 L523.7 479.5 L525.9 479.9 L528.1 480.3 L530.3 480.7 L532.6 481.2 L534.8 481.8 L537.0 482.4 L539.3 483.1 L541.5 483.8 L543.7 484.5 L545.9 485.4 L548.2 486.2 L550.4 487.2 L552.6 488.2 L554.9 489.2 L557.1 490.3 L559.3 491.4 L561.5 492.6 L563.8 493.9 L566.0 495.2 L568.2 496.5 L570.5 498.0 L572.7 499.4 L574.9 500.9 L577.1 502.5 L579.4 504.1 L581.6 505.8 L583.8 507.5 L586.1 509.3 L588.3 511.2 L590.5 513.1 L592.7 515.0 L595.0 517.0 L597.2 519.0 L599.4 521.1 M481.2 492.0 L482.7 491.1 L484.3 490.2 L485.9 489.4 L487.5 488.6 L489.1 487.9 L490.7 487.2 L492.3 486.5 L493.9 486.0 L495.5 485.4 L497.1 484.9 L498.7 484.5 L500.3 484.1 L501.9 483.7 L503.4 483.4 L505.0 483.1 L506.6 482.9 L508.2 482.8 L509.8 482.6 L511.4 482.6 L513.0 482.6 L515.1 482.6 L517.1 482.6 L519.2 482.8 L521.3 482.9 L523.4 483.2 L525.5 483.4 L527.5 483.7 L529.6 484.1 L531.7 484.5 L533.8 485.0 L535.8 485.5 L537.9 486.0 L540.0 486.6 L542.0 487.3 L544.1 488.0 L546.2 488.7 L548.3 489.5 L550.4 490.3 L552.4 491.2 L554.5 492.2 L556.6 493.1 L558.6 494.2 L560.7 495.3 L562.8 496.4 L564.9 497.6 L567.0 498.8 L569.0 500.1 L571.1 501.4 L573.2 502.8 L575.2 504.2 L577.3 505.6 L579.4 507.2 L581.5 508.7 L583.5 510.3 L585.6 512.0 L587.7 513.7 L589.8 515.4 L591.9 517.3 L593.9 519.1 L596.0 521.0 M486.5 495.9 L488.0 495.0 L489.4 494.2 L490.9 493.3 L492.4 492.6 L493.8 491.8 L495.3 491.2 L496.7 490.5 L498.2 489.9 L499.7 489.4 L501.1 488.9 L502.6 488.4 L504.0 488.0 L505.5 487.7 L507.0 487.4 L508.4 487.1 L509.9 486.9 L511.3 486.8 L512.8 486.6 L514.3 486.6 L515.7 486.5 L517.6 486.6 L519.6 486.6 L521.5 486.7 L523.4 486.9 L525.3 487.1 L527.2 487.3 L529.2 487.6 L531.1 487.9 L533.0 488.3 L534.9 488.7 L536.8 489.1 L538.8 489.6 L540.7 490.2 L542.6 490.7 L544.5 491.4 L546.5 492.0 L548.4 492.7 L550.3 493.5 L552.2 494.3 L554.1 495.1 L556.1 496.0 L558.0 496.9 L559.9 497.9 L561.8 498.9 L563.8 499.9 L565.7 501.0 L567.6 502.2 L569.5 503.4 L571.4 504.6 L573.4 505.8 L575.3 507.2 L577.2 508.5 L579.1 509.9 L581.0 511.3 L583.0 512.8 L584.9 514.3 L586.8 515.9 L588.7 517.5 L590.6 519.2 L592.6 520.9 M492.1 499.6 L493.4 498.7 L494.7 497.9 L496.0 497.1 L497.3 496.3 L498.7 495.6 L500.0 495.0 L501.3 494.4 L502.6 493.8 L503.9 493.3 L505.3 492.8 L506.6 492.4 L507.9 492.0 L509.2 491.6 L510.5 491.4 L511.8 491.1 L513.2 490.9 L514.5 490.7 L515.8 490.6 L517.1 490.6 L518.4 490.5 L520.2 490.6 L522.0 490.6 L523.7 490.7 L525.5 490.8 L527.3 491.0 L529.0 491.2 L530.8 491.5 L532.6 491.7 L534.3 492.1 L536.1 492.4 L537.9 492.8 L539.6 493.3 L541.4 493.7 L543.2 494.2 L544.9 494.8 L546.7 495.4 L548.5 496.0 L550.2 496.6 L552.0 497.3 L553.8 498.1 L555.6 498.9 L557.3 499.7 L559.1 500.5 L560.9 501.4 L562.6 502.3 L564.4 503.3 L566.2 504.3 L567.9 505.3 L569.7 506.4 L571.5 507.5 L573.2 508.7 L575.0 509.8 L576.8 511.1 L578.5 512.3 L580.3 513.6 L582.1 515.0 L583.8 516.4 L585.6 517.8 L587.4 519.2 L589.1 520.7 M498.0 502.7 L499.1 501.9 L500.3 501.1 L501.5 500.4 L502.6 499.7 L503.8 499.1 L504.9 498.5 L506.1 498.0 L507.2 497.5 L508.4 497.0 L509.6 496.6 L510.7 496.2 L511.9 495.8 L513.0 495.5 L514.2 495.3 L515.4 495.0 L516.5 494.9 L517.7 494.7 L518.8 494.6 L520.0 494.5 L521.1 494.5 L522.8 494.5 L524.4 494.6 L526.0 494.7 L527.6 494.8 L529.2 494.9 L530.8 495.1 L532.4 495.3 L534.1 495.6 L535.7 495.8 L537.3 496.2 L538.9 496.5 L540.5 496.9 L542.1 497.3 L543.7 497.7 L545.4 498.2 L547.0 498.7 L548.6 499.2 L550.2 499.8 L551.8 500.4 L553.4 501.0 L555.0 501.7 L556.7 502.4 L558.3 503.1 L559.9 503.9 L561.5 504.7 L563.1 505.5 L564.7 506.4 L566.3 507.3 L568.0 508.2 L569.6 509.2 L571.2 510.2 L572.8 511.2 L574.4 512.3 L576.0 513.3 L577.6 514.5 L579.3 515.6 L580.9 516.8 L582.5 518.0 L584.1 519.3 L585.7 520.6 M503.9 505.8 L504.9 505.0 L505.9 504.4 L506.9 503.7 L507.9 503.1 L508.9 502.6 L509.9 502.1 L510.9 501.6 L511.9 501.1 L512.9 500.7 L513.9 500.3 L514.9 500.0 L515.9 499.7 L516.9 499.4 L517.9 499.2 L518.9 499.0 L519.9 498.8 L520.9 498.7 L521.9 498.6 L522.9 498.5 L523.9 498.5 L525.3 498.5 L526.8 498.6 L528.2 498.6 L529.7 498.7 L531.2 498.9 L532.6 499.0 L534.1 499.2 L535.5 499.4 L537.0 499.6 L538.5 499.9 L539.9 500.2 L541.4 500.5 L542.8 500.8 L544.3 501.2 L545.8 501.6 L547.2 502.0 L548.7 502.5 L550.2 503.0 L551.6 503.5 L553.1 504.0 L554.5 504.6 L556.0 505.1 L557.5 505.8 L558.9 506.4 L560.4 507.1 L561.8 507.8 L563.3 508.5 L564.8 509.3 L566.2 510.0 L567.7 510.8 L569.1 511.7 L570.6 512.5 L572.1 513.4 L573.5 514.3 L575.0 515.3 L576.4 516.3 L577.9 517.3 L579.4 518.3 L580.8 519.3 L582.3 520.4 M509.8 508.8 L510.6 508.2 L511.5 507.6 L512.3 507.1 L513.1 506.6 L514.0 506.1 L514.8 505.6 L515.7 505.2 L516.5 504.8 L517.3 504.4 L518.2 504.1 L519.0 503.8 L519.9 503.5 L520.7 503.3 L521.5 503.1 L522.4 502.9 L523.2 502.8 L524.1 502.7 L524.9 502.6 L525.7 502.5 L526.6 502.5 L527.9 502.5 L529.2 502.6 L530.5 502.6 L531.8 502.7 L533.1 502.8 L534.4 502.9 L535.7 503.1 L537.0 503.2 L538.3 503.4 L539.6 503.6 L541.0 503.9 L542.3 504.1 L543.6 504.4 L544.9 504.7 L546.2 505.0 L547.5 505.4 L548.8 505.7 L550.1 506.1 L551.4 506.5 L552.7 507.0 L554.0 507.4 L555.3 507.9 L556.6 508.4 L557.9 508.9 L559.2 509.5 L560.6 510.0 L561.9 510.6 L563.2 511.2 L564.5 511.9 L565.8 512.5 L567.1 513.2 L568.4 513.9 L569.7 514.6 L571.0 515.4 L572.3 516.1 L573.6 516.9 L574.9 517.7 L576.2 518.6 L577.6 519.4 L578.9 520.3 M515.7 511.9 L516.4 511.4 L517.1 510.9 L517.7 510.4 L518.4 510.0 L519.1 509.6 L519.8 509.2 L520.5 508.8 L521.1 508.5 L521.8 508.1 L522.5 507.9 L523.2 507.6 L523.8 507.4 L524.5 507.2 L525.2 507.0 L525.9 506.8 L526.6 506.7 L527.2 506.6 L527.9 506.6 L528.6 506.5 L529.3 506.5 L530.4 506.5 L531.6 506.5 L532.7 506.6 L533.9 506.6 L535.1 506.7 L536.2 506.8 L537.4 506.9 L538.5 507.1 L539.7 507.2 L540.8 507.4 L542.0 507.5 L543.1 507.7 L544.3 507.9 L545.4 508.2 L546.6 508.4 L547.7 508.7 L548.9 509.0 L550.1 509.3 L551.2 509.6 L552.4 509.9 L553.5 510.3 L554.7 510.6 L555.8 511.0 L557.0 511.4 L558.1 511.8 L559.3 512.3 L560.4 512.7 L561.6 513.2 L562.7 513.7 L563.9 514.2 L565.0 514.7 L566.2 515.2 L567.4 515.8 L568.5 516.4 L569.7 516.9 L570.8 517.6 L572.0 518.2 L573.1 518.8 L574.3 519.5 L575.4 520.1 M521.6 515.0 L522.1 514.6 L522.6 514.1 L523.2 513.8 L523.7 513.4 L524.2 513.0 L524.7 512.7 L525.2 512.4 L525.8 512.1 L526.3 511.9 L526.8 511.6 L527.3 511.4 L527.8 511.2 L528.4 511.1 L528.9 510.9 L529.4 510.8 L529.9 510.7 L530.4 510.6 L531.0 510.5 L531.5 510.5 L532.0 510.5 L533.0 510.5 L534.0 510.5 L535.0 510.6 L536.0 510.6 L537.0 510.6 L538.0 510.7 L539.0 510.8 L540.0 510.9 L541.0 511.0 L542.0 511.1 L543.0 511.2 L544.0 511.4 L545.0 511.5 L546.0 511.7 L547.0 511.8 L548.0 512.0 L549.0 512.2 L550.0 512.4 L551.0 512.6 L552.0 512.9 L553.0 513.1 L554.0 513.4 L555.0 513.6 L556.0 513.9 L557.0 514.2 L558.0 514.5 L559.0 514.8 L560.0 515.2 L561.0 515.5 L562.0 515.8 L563.0 516.2 L564.0 516.6 L565.0 517.0 L566.0 517.4 L567.0 517.8 L568.0 518.2 L569.0 518.6 L570.0 519.1 L571.0 519.5 L572.0 520.0" stroke="#111" stroke-width="1.1" fill="none"/><path d="M242 357.5 L298.3 513.4 L309.7 513.4 L253.1 358 Z" fill="#d0d0dc" fill-opacity="0.7"/><path d="M242 357.5 L298.3 513.4 L303.5 513.4 L247.6 357.5 Z" fill="#c4c4cc"/><path d="M298.3 513.4 L325.2 587.3 L336.6 587.3 L309.7 513.4 Z" fill="#eef0fa" fill-opacity="0.6"/><path d="M242 357.5 L325.2 587.3 L336.6 587.3 M253.1 358 L335.6 584.5 M298.3 513.4 H309.7" stroke="#000" stroke-width="1.2" fill="none"/><path d="M328 575 L333 586" stroke="#f09020" stroke-width="3" fill="none"/><path d="M247.6 357.5 L330.4 587" stroke="#0c0c50" stroke-width="3.2" fill="none"/><path d="M330.4 587.5 L523.6 516.5 L558.2 520 L590 523.4 L620 525 L650 526.3 L687.6 527.7" stroke="#0c0c50" stroke-width="3.1" fill="none" stroke-linejoin="round"/></g><rect x="209.5" y="221.5" width="752" height="501" fill="none" stroke="#000" stroke-width="1"/><rect x="22" y="221" width="161" height="499" fill="#fff"/><rect x="90" y="238" width="28" height="319" fill="#c0c0c0"/><rect x="90" y="558" width="28" height="148" fill="url(#lh)"/><path d="M89.5 238V706 M118.5 238V706" stroke="#000" stroke-width="1"/><path d="M22 237.5H183" stroke="#000" stroke-width="2"/><path d="M22 557.5H183 M22 706.5H183" stroke="#000" stroke-width="1" stroke-dasharray="3 2"/><rect x="98.5" y="686.5" width="12" height="20" fill="#f5891e" stroke="#3a2a1a" stroke-width="1"/><rect x="102.5" y="691.5" width="4" height="15" fill="#4a4a4a" stroke="#222" stroke-width="1"/><rect x="22.5" y="221.5" width="160" height="498" fill="none" stroke="#000" stroke-width="1"/><text x="28" y="258.7" font-family="Liberation Sans" font-size="23" letter-spacing="0.6" fill="#0808c8">0 m</text><text x="122.5" y="401.4" font-family="Liberation Sans" font-size="12.2" fill="#1a1a90">Aggregate</text><text x="28.5" y="576.6" font-family="Liberation Sans" font-size="21.5" fill="#0a0ac8">7.5 m</text><text x="28.5" y="643.9" font-family="Liberation Sans" font-size="13" fill="#1a1a90">127.1 kg</text><text x="28.5" y="659.6" font-family="Liberation Sans" font-size="13" letter-spacing="0.4" fill="#1a1a90">3.5 m</text><text x="123.5" y="634.8" font-family="Liberation Sans" font-size="9" letter-spacing="0.9" fill="#1a1a90">EMULSÃO</text><text x="28" y="717.7" font-family="Liberation Sans" font-size="13" fill="#1a1a90">11m</text></svg>
<div class="abs" style="left:979px;top:227px;width:5px;height:488px;border-left:1px solid #8a8a8a;border-top:1px solid #8a8a8a;background:#f0f0f0;box-shadow:inset 1px 0 0 #f0f0f0"></div>
<div class="abs" style="left:983px;top:228px;width:1px;height:486px;background:#fff"></div>
<div class="abs" style="left:968px;top:470px;width:29px;height:10px;background:#f0f0f0;border-right:1px solid #808080;border-bottom:1px solid #808080;box-shadow:inset 1px 1px 0 #fff"></div>
<div class="abs" style="left:26px;top:732px;width:150px;height:5px;border-top:1px solid #8a8a8a;border-left:1px solid #8a8a8a;background:#fff"></div>
<div class="abs" style="left:82px;top:721px;width:11px;height:29px;background:#f0f0f0;border-right:1px solid #808080;border-bottom:1px solid #808080;box-shadow:inset 1px 1px 0 #fff"></div>
<div class="cb" style="left:25px;top:757px"></div>
<svg class="abs" style="left:28px;top:761px" width="14" height="13" viewBox="0 0 14 13"><path d="M1.5 6.5 L5 10.5 L12.5 2" stroke="#000" stroke-width="3" fill="none"/></svg>
<div class="t" style="left:51px;top:759.5px;font-size:15.8px">Display more than one data</div>
<div class="cb" style="left:25px;top:793px"></div>
<div class="t" style="left:51px;top:796px;font-size:15.2px">min</div>
<div class="cb" style="left:136px;top:793px"></div>
<div class="t" style="left:162px;top:796px;font-size:15.2px">Max</div>
<div class="btn" style="left:373px;top:750px;width:116px;height:36px"></div>
<div class="t" style="left:373px;top:760.5px;width:116px;text-align:center;font-size:16px;font-weight:bold">Calibrate</div>
<div class="cb" style="left:508px;top:754px"></div>
<div class="t" style="left:534px;top:757px;font-size:16px">Bench</div>
<div class="cb" style="left:508px;top:793px"></div>
<div class="t" style="left:534px;top:796px;font-size:15.5px">Cratering</div>
<div class="inpg" style="left:633px;top:753px;width:102px;height:29px"></div>
<div class="t" style="left:633px;top:761.5px;width:97px;text-align:right;font-size:16px;color:#a0a0a0">0.00</div>
<div class="inpg" style="left:633px;top:791px;width:102px;height:29px"></div>
<div class="t" style="left:633px;top:799.5px;width:97px;text-align:right;font-size:16px;color:#a0a0a0">0.00</div>
<svg class="abs" style="left:756px;top:757px" width="22" height="22" viewBox="0 0 22 22"><circle cx="11" cy="11" r="9.5" fill="#fff"/><path d="M4.3 17.7 A9.5 9.5 0 0 1 17.7 4.3" stroke="#8a8a8a" stroke-width="2.6" fill="none"/><path d="M5.5 16.5 A7.8 7.8 0 0 1 16.5 5.5" stroke="#5a5a5a" stroke-width="1" fill="none"/><circle cx="11" cy="11" r="2.9" fill="#000"/></svg>
<div class="t" style="left:782px;top:760px;font-size:16px">Free face</div>
<svg class="abs" style="left:756px;top:797px" width="22" height="22" viewBox="0 0 22 22"><circle cx="11" cy="11" r="9.5" fill="#fff"/><path d="M4.3 17.7 A9.5 9.5 0 0 1 17.7 4.3" stroke="#8a8a8a" stroke-width="2.6" fill="none"/><path d="M5.5 16.5 A7.8 7.8 0 0 1 16.5 5.5" stroke="#5a5a5a" stroke-width="1" fill="none"/></svg>
<div class="t" style="left:782px;top:801px;font-size:16px">All holes</div>
<div class="btn" style="left:887px;top:750px;width:116px;height:36px"></div>
<div class="t" style="left:887px;top:760.5px;width:116px;text-align:center;font-size:15.5px;font-weight:bold">Auto</div>
</body></html>
